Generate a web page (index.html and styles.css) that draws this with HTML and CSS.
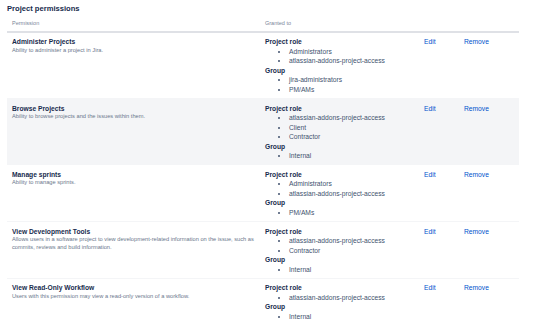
FILE: index.html
```html
<!DOCTYPE html>
<html>
<head>
    <title>Project permissions</title>
    <link rel="stylesheet" href="styles.css">
</head>
<body>
    <h2 class="page-title">Project permissions</h2>

    <table class="perm-table">
        <colgroup>
            <col class="col-perm">
            <col class="col-grant">
            <col class="col-edit">
            <col class="col-remove">
        </colgroup>
        <thead>
            <tr>
                <th>Permission</th>
                <th>Granted to</th>
                <th></th>
                <th></th>
            </tr>
        </thead>
        <tbody>
            <tr>
                <td>
                    <div class="perm-name">Administer Projects</div>
                    <div class="perm-desc">Ability to administer a project in Jira.</div>
                </td>
                <td>
                    <div class="grant-type">Project role</div>
                    <ul>
                        <li>Administrators</li>
                        <li>atlassian-addons-project-access</li>
                    </ul>
                    <div class="grant-type">Group</div>
                    <ul>
                        <li>jira-administrators</li>
                        <li>PM/AMs</li>
                    </ul>
                </td>
                <td><a href="#">Edit</a></td>
                <td><a href="#">Remove</a></td>
            </tr>
            <tr class="hover">
                <td>
                    <div class="perm-name">Browse Projects</div>
                    <div class="perm-desc">Ability to browse projects and the issues within them.</div>
                </td>
                <td>
                    <div class="grant-type">Project role</div>
                    <ul>
                        <li>atlassian-addons-project-access</li>
                        <li>Client</li>
                        <li>Contractor</li>
                    </ul>
                    <div class="grant-type">Group</div>
                    <ul>
                        <li>Internal</li>
                    </ul>
                </td>
                <td><a href="#">Edit</a></td>
                <td><a href="#">Remove</a></td>
            </tr>
            <tr>
                <td>
                    <div class="perm-name">Manage sprints</div>
                    <div class="perm-desc">Ability to manage sprints.</div>
                </td>
                <td>
                    <div class="grant-type">Project role</div>
                    <ul>
                        <li>Administrators</li>
                        <li>atlassian-addons-project-access</li>
                    </ul>
                    <div class="grant-type">Group</div>
                    <ul>
                        <li>PM/AMs</li>
                    </ul>
                </td>
                <td><a href="#">Edit</a></td>
                <td><a href="#">Remove</a></td>
            </tr>
            <tr>
                <td>
                    <div class="perm-name">View Development Tools</div>
                    <div class="perm-desc">Allows users in a software project to view development-related information on the issue, such as commits, reviews and build information.</div>
                </td>
                <td>
                    <div class="grant-type">Project role</div>
                    <ul>
                        <li>atlassian-addons-project-access</li>
                        <li>Contractor</li>
                    </ul>
                    <div class="grant-type">Group</div>
                    <ul>
                        <li>Internal</li>
                    </ul>
                </td>
                <td><a href="#">Edit</a></td>
                <td><a href="#">Remove</a></td>
            </tr>
            <tr>
                <td>
                    <div class="perm-name">View Read-Only Workflow</div>
                    <div class="perm-desc">Users with this permission may view a read-only version of a workflow.</div>
                </td>
                <td>
                    <div class="grant-type">Project role</div>
                    <ul>
                        <li>atlassian-addons-project-access</li>
                    </ul>
                    <div class="grant-type">Group</div>
                    <ul>
                        <li>Internal</li>
                    </ul>
                </td>
                <td><a href="#">Edit</a></td>
                <td><a href="#">Remove</a></td>
            </tr>
        </tbody>
    </table>
</body>
</html>
```

FILE: styles.css
```css
body {
    font-family: "Liberation Sans", Arial, sans-serif;
    margin: 0;
    padding: 0 14px 0 7px;
    background-color: #fff;
    color: #172b4d;
    font-size: 6.7px;
    line-height: 9.5px;
}
.page-title {
    font-size: 7.6px;
    line-height: 12px;
    font-weight: bold;
    margin: 3px 0 0 0;
    color: #172b4d;
}
.perm-table {
    width: 512px;
    border-collapse: collapse;
    table-layout: fixed;
}
.col-perm { width: 253px; }
.col-grant { width: 159px; }
.col-edit { width: 40px; }
.col-remove { width: 60px; }
th {
    text-align: left;
    font-weight: normal;
    font-size: 5.5px;
    line-height: 7.7px;
    color: #7a869a;
    padding: 5px 5px 3px 5px;
    border-bottom: 2px solid #dfe1e6;
}
td {
    vertical-align: top;
    padding: 4.5px 5px 3.8px 5px;
    border-bottom: 1px solid #f4f5f7;
}
td:first-child {
    padding-right: 1px;
}
tr.hover td {
    background-color: #f4f5f7;
}
.perm-name {
    font-weight: bold;
}
.perm-desc {
    font-size: 5.7px;
    line-height: 7.7px;
    color: #6b778c;
}
.grant-type {
    font-weight: bold;
}
ul {
    margin: 0;
    padding-left: 24px;
    color: #42526e;
}
a {
    color: #0052cc;
    text-decoration: none;
}
```
